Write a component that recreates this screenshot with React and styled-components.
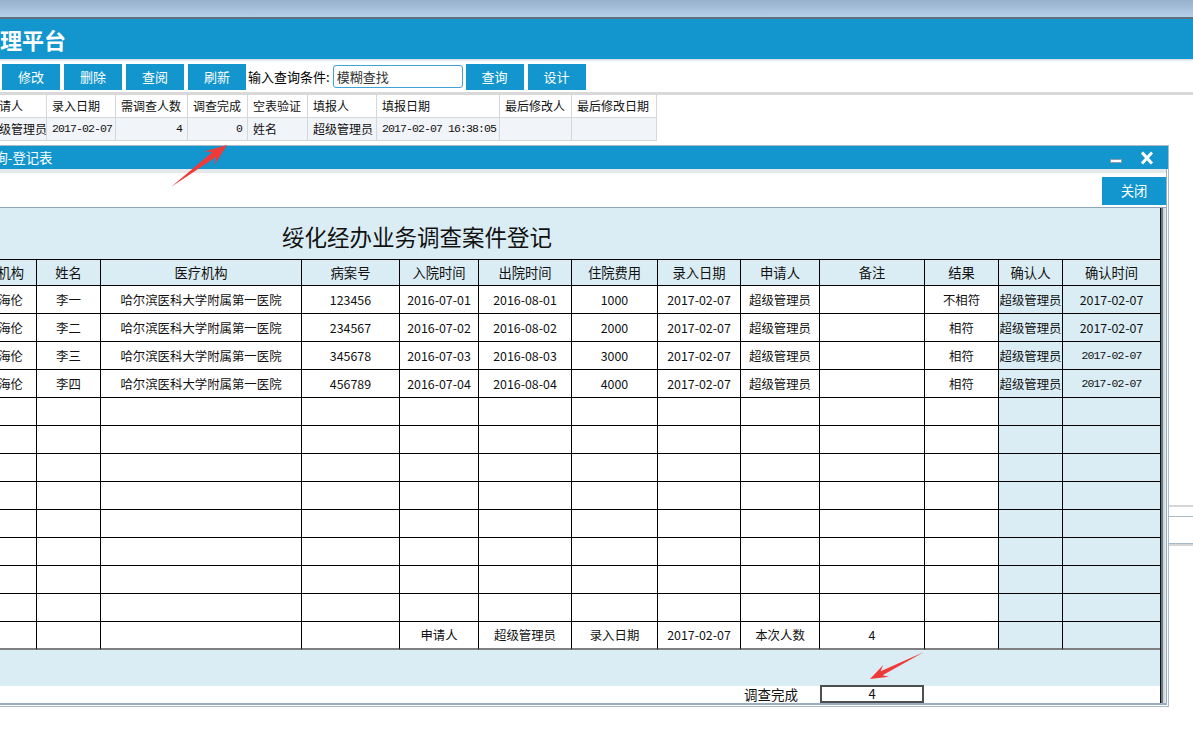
import React from "react";
import styled, { createGlobalStyle } from "styled-components";

const BLUE = "#1296cd";
const LIGHT = "#dbedf4";
const CJK = `"Noto Sans CJK SC", "Noto Sans", sans-serif`;
const MONO = `"Liberation Mono", "Noto Sans CJK SC", monospace`;

const GlobalStyle = createGlobalStyle`
  html, body { margin: 0; padding: 0; background: #fff; overflow: hidden; }
  body { font-family: ${CJK}; color: #000; }
  *, *::before, *::after { box-sizing: border-box; }
`;

/* ---------- background page ---------- */
const Root = styled.div`
  position: relative;
  width: 1193px;
  height: 747px;
  overflow: hidden;
`;
const Page = styled.div`
  margin-left: -60px;
`;
const TopBand = styled.div`
  height: 17px;
  background: linear-gradient(#96b0ce, #b6cfe8);
`;
const Header = styled.header`
  height: 42px;
  border-top: 2px solid #5d6e7c;
  background: ${BLUE};
  display: flex;
  align-items: center;
  padding-left: 38px;
`;
const Brand = styled.h1`
  margin: 0;
  font: bold 22px/1 ${CJK};
  color: #fff;
`;
const Shade = styled.div`
  height: 3px;
  background: linear-gradient(#d3dae1, #fff);
`;
const Toolbar = styled.div`
  height: 30px;
  padding-top: 2px;
  display: flex;
  align-items: flex-start;
  gap: 4px;
`;
const ToolButton = styled.button`
  width: 58px;
  height: 26px;
  border: none;
  padding: 0;
  background: ${BLUE};
  color: #fff;
  font: 13px/26px ${CJK};
`;
const SearchLabel = styled.label`
  height: 26px;
  line-height: 26px;
  font-size: 13px;
  margin: 0 -1px 0 -2px;
  white-space: nowrap;
`;
const SearchInput = styled.input`
  width: 130px;
  height: 23px;
  margin: 1px -1px 0 0;
  border: 1px solid #3fa3d6;
  border-radius: 3px;
  padding: 0 3px;
  font: 13px ${CJK};
  color: #333;
  outline: none;
`;
const Divider = styled.div`
  height: 3px;
  background: #d9d9d9;
`;
const GridArea = styled.div`
  height: 412px;
  border-bottom: 2px solid #d6d6d6;
`;
const TopGrid = styled.div`
  display: grid;
  grid-template-columns: 42px 65px 69px 72px 60px 60px 69px 123px 72px 85px;
  width: max-content;
`;
const TopCell = styled.div`
  height: 23px;
  border-right: 1px solid #d3d8dd;
  border-bottom: 1px solid #d3d8dd;
  padding: 0 5px;
  background: ${(p) => (p.$data ? "#f1f4f8" : "#fff")};
  text-align: ${(p) => p.$align || "left"};
  font-family: ${(p) => (p.$mono ? MONO : CJK)};
  font-size: ${(p) => (p.$mono ? "11.5px" : "12px")};
  letter-spacing: ${(p) => (p.$mono ? "-0.9px" : "0")};
  line-height: 22px;
  color: #111;
  white-space: nowrap;
  overflow: hidden;
`;
const Pager = styled.div`
  margin-top: 9px;
  height: 28px;
  border-top: 1px solid #a7b9c8;
  border-bottom: 1px solid #a7b9c8;
`;
const PagerShade = styled.div`
  height: 2px;
  background: #d6d6d6;
`;

/* ---------- dialog window ---------- */
const Window = styled.section`
  position: absolute;
  left: -78px;
  top: 145px;
  width: 1247px;
  border: 1px solid #a9bac9;
  background: #fff;
  z-index: 2;
`;
const TitleBar = styled.div`
  height: 23px;
  background: ${BLUE};
  display: flex;
  align-items: center;
  padding: 0 13px 0 5px;
`;
const WinTitle = styled.div`
  flex: 1;
  color: #fff;
  font-size: 13.3px;
  white-space: nowrap;
`;
const WinTools = styled.div`
  display: flex;
  gap: 15px;
`;
const ToolIcon = styled.svg`
  display: block;
  width: 16px;
  height: 16px;
`;
const Panel = styled.div`
  margin: 0 1px 1px 0;
  border-right: 1px solid #9aaec0;
  border-bottom: 2px solid #9aaec0;
`;
const Strip = styled.div`
  height: 4px;
  background: #e3e8ed;
`;
const WinToolbar = styled.div`
  height: 34px;
  padding-top: 4px;
  display: flex;
  justify-content: flex-end;
`;
const CloseButton = styled.button`
  width: 64px;
  height: 28px;
  border: none;
  padding: 0;
  background: ${BLUE};
  color: #fff;
  font: 13.3px/28px ${CJK};
`;
const Body = styled.div`
  height: 496px;
  border-top: 1px solid #8ea4b8;
  display: flex;
`;
const Viewport = styled.div`
  flex: 1;
  min-width: 0;
  overflow: hidden;
`;
const ScrollEdge = styled.div`
  width: 3px;
  background: linear-gradient(90deg, #111 0 1px, #6d777d 1px);
`;
const Gutter = styled.div`
  width: 3px;
  background: linear-gradient(90deg, #c3d2dc, #e2ecf2);
`;
const Sheet = styled.div`
  width: 1488px;
  margin-left: -250px;
`;
const SheetTitle = styled.h2`
  margin: 0;
  height: 51px;
  padding-top: 5px;
  background: ${LIGHT};
  text-align: center;
  font: 400 22.5px/46px ${CJK};
  color: #111;
`;
const Table = styled.div`
  display: grid;
  grid-template-columns: ${(p) => p.$cols};
`;
const RCell = styled.div`
  height: ${(p) => (p.$head ? 27 : 28)}px;
  border-right: 1px solid #000;
  border-top: ${(p) => (p.$head ? "1px solid #000" : "none")};
  border-bottom: ${(p) => (p.$end ? "2px solid #7f7f7f" : "1px solid #000")};
  background: ${(p) => (p.$head || p.$tint ? LIGHT : "#fff")};
  display: flex;
  align-items: center;
  justify-content: ${(p) => (p.$align === "right" ? "flex-end" : "center")};
  padding-right: ${(p) => (p.$align === "right" ? "13px" : "0")};
  font-family: ${(p) => (p.$mono ? MONO : CJK)};
  font-size: ${(p) => (p.$mono ? "11.5px" : p.$head ? "13.3px" : "12.4px")};
  letter-spacing: ${(p) => (p.$mono ? "-0.9px" : "0")};
  color: #111;
  white-space: nowrap;
  overflow: hidden;
`;
const Band = styled.div`
  height: 36px;
  background: ${LIGHT};
`;
const Footer = styled.div`
  height: 17px;
  background: #fff;
  display: grid;
  grid-template-columns: ${(p) => p.$cols};
`;
const FootLabel = styled.label`
  grid-column: ${(p) => p.$col};
  text-align: right;
  padding-right: 22px;
  font-size: 13.5px;
  line-height: 16px;
  color: #111;
`;
const FootValue = styled.div`
  grid-column: ${(p) => p.$col};
  width: 104px;
  height: 18px;
  margin-top: -1px;
  border: 2px solid #4f4f4f;
  background: #fff;
  text-align: center;
  font-size: 13px;
  line-height: 14px;
  color: #111;
  position: relative;
  z-index: 1;
`;

/* ---------- annotation arrows ---------- */
const Annotations = styled.svg`
  position: absolute;
  left: 0;
  top: 0;
  width: 1193px;
  height: 747px;
  pointer-events: none;
  z-index: 5;
`;

function arrowPoints([x1, y1], [x2, y2], head, headW, shaft) {
  const dx = x2 - x1;
  const dy = y2 - y1;
  const len = Math.hypot(dx, dy);
  const ux = dx / len;
  const uy = dy / len;
  const nx = -uy;
  const ny = ux;
  const bx = x2 - ux * head;
  const by = y2 - uy * head;
  const nb = x2 - ux * (head * 0.72);
  const nby = y2 - uy * (head * 0.72);
  const pts = [
    [x1, y1],
    [nb + (nx * shaft) / 2, nby + (ny * shaft) / 2],
    [bx + (nx * headW) / 2, by + (ny * headW) / 2],
    [x2, y2],
    [bx - (nx * headW) / 2, by - (ny * headW) / 2],
    [nb - (nx * shaft) / 2, nby - (ny * shaft) / 2],
  ];
  return pts.map((p) => p.map((v) => v.toFixed(1)).join(",")).join(" ");
}

/* ---------- data ---------- */
const TOP_COLS = [
  { title: "序号" },
  { title: "申请人", value: "超级管理员" },
  { title: "录入日期", value: "2017-02-07", mono: true },
  { title: "需调查人数", value: "4", mono: true, align: "right" },
  { title: "调查完成", value: "0", mono: true, align: "right" },
  { title: "空表验证", value: "姓名" },
  { title: "填报人", value: "超级管理员" },
  { title: "填报日期", value: "2017-02-07 16:38:05", mono: true },
  { title: "最后修改人", value: "" },
  { title: "最后修改日期", value: "" },
];

const COLS = [
  { key: "no", title: "序号", w: 56 },
  { key: "id", title: "身份证号", w: 230 },
  { key: "org", title: "经办机构", w: 78, align: "right" },
  { key: "name", title: "姓名", w: 64 },
  { key: "hosp", title: "医疗机构", w: 201 },
  { key: "case", title: "病案号", w: 98 },
  { key: "in", title: "入院时间", w: 79 },
  { key: "out", title: "出院时间", w: 93 },
  { key: "fee", title: "住院费用", w: 86 },
  { key: "date", title: "录入日期", w: 83 },
  { key: "applicant", title: "申请人", w: 79 },
  { key: "memo", title: "备注", w: 105 },
  { key: "result", title: "结果", w: 74 },
  { key: "checker", title: "确认人", w: 64, tint: true },
  { key: "checkTime", title: "确认时间", w: 98, tint: true },
];
const TEMPLATE = COLS.map((c) => `${c.w}px`).join(" ");

const base = {
  org: "海伦",
  hosp: "哈尔滨医科大学附属第一医院",
  date: "2017-02-07",
  applicant: "超级管理员",
  checker: "超级管理员",
  checkTime: "2017-02-07",
};
const ROWS = [
  { ...base, no: "1", name: "李一", case: "123456", in: "2016-07-01", out: "2016-08-01", fee: "1000", result: "不相符" },
  { ...base, no: "2", name: "李二", case: "234567", in: "2016-07-02", out: "2016-08-02", fee: "2000", result: "相符" },
  { ...base, no: "3", name: "李三", case: "345678", in: "2016-07-03", out: "2016-08-03", fee: "3000", result: "相符", mono: ["checkTime"] },
  { ...base, no: "4", name: "李四", case: "456789", in: "2016-07-04", out: "2016-08-04", fee: "4000", result: "相符", mono: ["checkTime"] },
  ...Array.from({ length: 8 }, () => ({})),
  { in: "申请人", out: "超级管理员", fee: "录入日期", date: "2017-02-07", applicant: "本次人数", memo: "4", end: true },
];

export default function App() {
  const applicantCol = COLS.findIndex((c) => c.key === "applicant") + 1;
  const memoCol = COLS.findIndex((c) => c.key === "memo") + 1;
  return (
    <>
      <GlobalStyle />
      <Root>
        <Page>
          <TopBand />
          <Header>
            <Brand>管理平台</Brand>
          </Header>
          <Shade />
          <Toolbar>
            <ToolButton>添加</ToolButton>
            <ToolButton>修改</ToolButton>
            <ToolButton>删除</ToolButton>
            <ToolButton>查阅</ToolButton>
            <ToolButton>刷新</ToolButton>
            <SearchLabel>输入查询条件:</SearchLabel>
            <SearchInput defaultValue="模糊查找" />
            <ToolButton>查询</ToolButton>
            <ToolButton>设计</ToolButton>
          </Toolbar>
          <Divider />
          <GridArea>
            <TopGrid>
              {TOP_COLS.map((c, i) => (
                <TopCell key={`h${i}`}>{c.title}</TopCell>
              ))}
              {TOP_COLS.map((c, i) => (
                <TopCell key={`d${i}`} $data $mono={c.mono} $align={c.align}>
                  {c.value}
                </TopCell>
              ))}
            </TopGrid>
          </GridArea>
          <Pager />
          <PagerShade />
        </Page>

        <Window>
          <TitleBar>
            <WinTitle>调查案件查询-登记表</WinTitle>
            <WinTools>
              <ToolIcon viewBox="0 0 16 16">
                <rect x="2.5" y="9.5" width="11" height="3" fill="#fff" stroke="#8b9cab" />
              </ToolIcon>
              <ToolIcon viewBox="0 0 16 16">
                <path d="M4 3.5 L12 12.5 M12 3.5 L4 12.5" stroke="#fff" strokeWidth="3" strokeLinecap="square" fill="none" />
              </ToolIcon>
            </WinTools>
          </TitleBar>
          <Panel>
            <Strip />
            <WinToolbar>
              <CloseButton>关闭</CloseButton>
            </WinToolbar>
            <Body>
              <Viewport>
                <Sheet>
                  <SheetTitle>绥化经办业务调查案件登记</SheetTitle>
                  <Table $cols={TEMPLATE}>
                    {COLS.map((c) => (
                      <RCell key={c.key} $head>
                        {c.title}
                      </RCell>
                    ))}
                    {ROWS.map((r, ri) =>
                      COLS.map((c) => (
                        <RCell
                          key={`${ri}-${c.key}`}
                          $tint={c.tint}
                          $align={c.align}
                          $end={r.end}
                          $mono={r.mono && r.mono.includes(c.key)}
                        >
                          {r[c.key] || ""}
                        </RCell>
                      ))
                    )}
                  </Table>
                  <Band />
                  <Footer $cols={TEMPLATE}>
                    <FootLabel $col={applicantCol}>调查完成</FootLabel>
                    <FootValue $col={memoCol}>4</FootValue>
                  </Footer>
                </Sheet>
              </Viewport>
              <ScrollEdge />
              <Gutter />
            </Body>
          </Panel>
        </Window>

        <Annotations viewBox="0 0 1193 747">
          <polygon points={arrowPoints([171, 187], [227, 145], 22, 17, 6)} fill="#f03a3a" />
          <polygon points={arrowPoints([924, 652], [870, 679], 18, 13, 4.5)} fill="#f03a3a" />
        </Annotations>
      </Root>
    </>
  );
}
